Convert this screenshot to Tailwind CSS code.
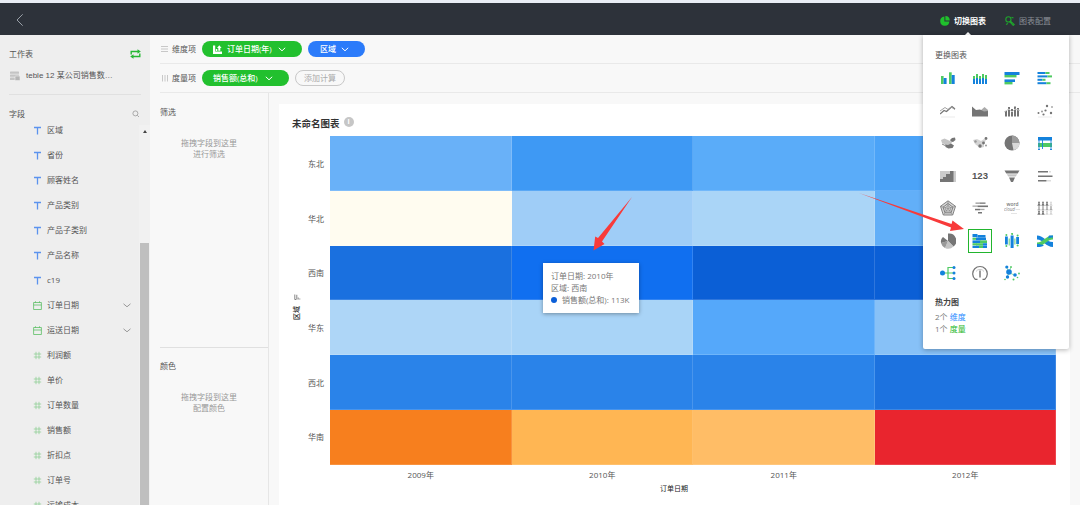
<!DOCTYPE html>
<html lang="zh-CN">
  <head>
    <meta charset="UTF-8" />
    <meta name="viewport" content="width=device-width, initial-scale=1.0" />
    <title>未命名图表</title>
    <script src="https://cdn.jsdelivr.net/npm/@tailwindcss/browser@4"></script>
  </head>

  <body
    class="relative flex flex-col w-[1080px] h-[505px] overflow-hidden bg-[#f8f8f8] font-['Open_Sans','Noto_Sans_CJK_SC',sans-serif] text-[8px] leading-3 text-[#555]"
  >
    <!-- top bar -->
    <header
      class="flex items-center shrink-0 h-[35px] border-t-3 border-[#e9edf5] bg-[#2d323a] pl-4 pr-[29px]"
    >
      <svg class="w-2 h-3 mt-px" viewBox="0 0 8 12" fill="none" stroke="#99a0a8">
        <path d="M6.7 .3 1 6l5.700 5.700" />
      </svg>
      <div class="flex items-center ml-auto mt-1 gap-[19px]">
        <div class="relative flex items-center gap-1 font-bold text-white">
          <svg class="size-[10px]" viewBox="0 0 10 10" fill="#1fc02c">
            <path d="M4.4 .6v5h5A4.6 4.6 0 1 1 4.4.6z" />
            <path d="M5.4 0A4.6 4.6 0 0 1 9.8 4.6H5.4z" />
          </svg>
          切换图表
          <div
            class="absolute left-[24px] top-[17px] border-x-4 border-b-4 border-x-transparent border-b-white"
          ></div>
        </div>
        <div class="flex items-center gap-1 text-[#8a8f96]">
          <svg
            class="size-[10px]"
            viewBox="0 0 10 10"
            fill="none"
            stroke="#1fa52c"
            stroke-width="1.1"
          >
            <circle cx="3.400" cy="3.400" r="2.600" />
            <path d="m5.200 4.800 4 3.600-1 1-3.800-4M6.500 1.200l2 .8M1 8.500l2-1" />
          </svg>
          图表配置
        </div>
      </div>
    </header>

    <div class="flex flex-1 min-h-0">
      <!-- fields -->
      <aside
        class="relative flex flex-col w-[150px] shrink-0 bg-[#eee] overflow-hidden"
      >
        <div class="flex items-center justify-between pl-[9px] pr-[9px] pt-[13px]">
          工作表
          <svg
            class="w-[11px] h-[10px]"
            viewBox="0 0 11 10"
            fill="none"
            stroke="#27b834"
            stroke-width="1.4"
          >
            <path d="M1.200 5.500V2.500H8M9.800 4.500v3H3" />
            <path
              d="M7.500.2v4.600L10.800 2.500zM3.500 5.200v4.600L.2 7.500z"
              fill="#27b834"
              stroke="none"
            />
          </svg>
        </div>
        <div class="flex items-center gap-[6px] pl-[10px] mt-[10px]">
          <svg class="size-[10px]" viewBox="0 0 10 10" fill="#c4c4c4">
            <rect width="9" height="2.400" y=".4" rx=".6" />
            <rect width="9" height="2.400" y="3.400" rx=".6" />
            <rect width="5" height="2.600" y="6.400" rx=".6" />
            <rect
              x="5"
              y="5"
              width="5"
              height="4.600"
              rx=".8"
              fill="#b5b5b5"
              stroke="#eee"
              stroke-width=".6"
            />
          </svg>
          <p class="font-['Liberation_Sans','Noto_Sans_CJK_SC',sans-serif]">
            teble 12 某公司销售数…
          </p>
        </div>
        <div class="mx-[9px] mt-3 border-t border-[#e0e0e0]"></div>
        <div class="flex items-center justify-between pl-[9px] pr-[10px] mt-[13px]">
          字段
          <svg class="size-2" viewBox="0 0 8 8" fill="none" stroke="#999" stroke-width=".8">
            <circle cx="3.400" cy="3.400" r="2.500" />
            <path d="m5.300 5.300 1.700 1.700" />
          </svg>
        </div>
        <ul id="fields" class="flex flex-col -mt-[2.500px]"></ul>

        <!-- scrollbar -->
        <div class="absolute right-0 top-[90px] bottom-0 w-[11px] bg-[#f1f1f1]">
          <div
            class="mx-auto mt-[5px] w-0 border-x-[2.5px] border-b-3 border-x-transparent border-b-[#444]"
          ></div>
          <div class="absolute top-[118px] bottom-0 left-[1px] w-[9px] bg-[#bfbfbf]"></div>
        </div>
      </aside>

      <main class="flex flex-col flex-1 min-w-0 pl-[10px]">
        <!-- shelves -->
        <div class="flex items-center h-[29px] border-b border-[#e9e9e9]">
          <svg class="w-[9px] h-2 mr-[3px]" viewBox="0 0 9 8" stroke="#bbb" stroke-width=".8">
            <path d="M1 1.500h7M1 4h7M1 6.500h7" />
          </svg>
          维度项
          <div
            class="flex items-center h-4 ml-[6px] pl-[11px] w-[100px] rounded-full bg-[#22c02e] text-white font-medium"
          >
            <svg class="size-[9px] mr-[5px]" viewBox="0 0 9 9" fill="#fff">
              <path d="M0 .5h2.200v6H9V9H0z" />
              <path d="M2.800 4h1.500v2H2.800zM5.300 5.800V3H4L6.300.2 8.600 3H7.300v2.800z" />
            </svg>
            订单日期(年)
            <svg class="w-2 h-[5px] ml-[6px]" viewBox="0 0 8 5" fill="none" stroke="#fff">
              <path d="m.8.8 3.200 3 3.200-3" />
            </svg>
          </div>
          <div
            class="flex items-center h-4 ml-[6px] pl-3 w-[57px] rounded-full bg-[#2b7bfa] text-white font-medium"
          >
            区域
            <svg class="w-2 h-[5px] ml-[5px]" viewBox="0 0 8 5" fill="none" stroke="#fff">
              <path d="m.8.8 3.200 3 3.200-3" />
            </svg>
          </div>
        </div>
        <div class="flex items-center h-[29px] border-b border-[#e9e9e9]">
          <svg class="w-[9px] h-2 mr-[3px]" viewBox="0 0 9 8" stroke="#bbb" stroke-width=".8">
            <path d="M2.500 1v6.500M5 1v6.500M7.500 1v6.500" />
          </svg>
          度量项
          <div
            class="flex items-center h-4 ml-[6px] pl-[11px] w-[87px] rounded-full bg-[#22c02e] text-white font-medium"
          >
            销售额(总和)
            <svg class="w-2 h-[5px] ml-[7px]" viewBox="0 0 8 5" fill="none" stroke="#fff">
              <path d="m.8.8 3.200 3 3.200-3" />
            </svg>
          </div>
          <div
            class="flex items-center justify-center h-4 ml-[6px] w-[50px] rounded-full border border-[#c8c8c8] text-[#aaa]"
          >
            添加计算
          </div>
        </div>

        <div class="flex flex-1 min-h-0">
          <!-- filter and color wells -->
          <div class="flex flex-col w-[109px] shrink-0 border-r border-[#e6e6e6]">
            <div class="h-[255px] pt-[13px] border-b border-[#e0e0e0]">
              <p>筛选</p>
              <p class="mt-[19px] mr-[10px] text-center leading-[11px] text-[#999]">
                拖拽字段到这里<br />进行筛选
              </p>
            </div>
            <div class="pt-[12px]">
              <p>颜色</p>
              <p class="mt-[19px] mr-[10px] text-center leading-[11px] text-[#999]">
                拖拽字段到这里<br />配置颜色
              </p>
            </div>
          </div>

          <!-- chart -->
          <section class="relative flex flex-col ml-[10px] mt-[11px] w-[791px] bg-white">
            <div
              class="flex items-center gap-1 h-8 pl-[13px] pt-[7px] text-[9.500px] font-bold text-[#333]"
            >
              未命名图表
              <span
                class="flex items-center justify-center size-[10px] -mt-[3px] rounded-full bg-[#c6c6c6] text-[7px] text-white"
                >i</span
              >
            </div>
            <div class="flex">
              <div class="flex flex-col items-center w-9 pt-[158px]">
                <svg
                  class="w-[7px] h-[6px]"
                  viewBox="0 0 7 6"
                  fill="none"
                  stroke="#777"
                  stroke-width=".9"
                >
                  <path d="M.8.500v5h1.400M2.800.800v4.700M4.200 5.500V3.500M5.800 5.500V4.500" />
                </svg>
                <p
                  class="mt-1 h-4 text-[7px] leading-[12px] font-medium text-[#222] [writing-mode:sideways-lr]"
                >
                  区域
                </p>
              </div>
              <div id="rows" class="w-[15px] flex flex-col h-[328.500px] -ml-[6px] mr-[6px] pt-px"></div>
              <div id="heatmap" class="grid grid-cols-4 grid-rows-6 w-[726px] h-[328.500px]"></div>
            </div>
            <div id="years" class="grid grid-cols-4 w-[726px] ml-[51px] mt-1 text-center"></div>
            <p class="w-[726px] ml-[32px] mt-[2px] text-center text-[7px] text-[#222]">订单日期</p>

            <!-- tooltip -->
            <div
              class="absolute left-[264px] top-[159px] w-[96px] h-[50px] pl-2 pt-[7px] bg-white text-[#777] shadow-[0_1px_4px_rgba(0,0,0,.35)]"
            >
              <p>订单日期: 2010年</p>
              <p>区域: 西南</p>
              <p class="flex items-center gap-[5px] whitespace-nowrap">
                <span class="size-[6px] rounded-full bg-[#0b5fd8]"></span>销售额(总和): 113K
              </p>
            </div>
          </section>
        </div>
      </main>
    </div>

    <!-- chart type menu -->
    <div
      class="absolute left-[923px] top-[35px] w-[146px] h-[314px] rounded-b-xs bg-white shadow-[0_1px_5px_rgba(0,0,0,.3)]"
    >
      <p class="pl-[12px] pt-[14px]">更换图表</p>
      <div id="chartTypes" class="grid grid-cols-4 w-[129.500px] ml-[8.500px] mt-px"></div>
      <p class="pl-[12px] mt-[6px] font-bold text-[#444]">热力图</p>
      <p class="pl-[12px] mt-[3px] text-[#777]">2个 <span class="text-[#2b8cff]">维度</span></p>
      <p class="pl-[12px] text-[#777]">1个 <span class="text-[#1fb82c]">度量</span></p>
    </div>

    <!-- arrows -->
    <svg
      class="absolute left-0 top-0 w-[1080px] h-[505px] pointer-events-none"
      fill="#f83a3a"
    >
      <path d="M632 197 602 241.500 604.500 244 593.500 250.500 595.200 236.500 598 238z" />
      <path d="M859 193 951.500 224 952.500 220.500 964 229 950 231 951 227.500z" />
    </svg>

    <script>
      const fields = [
        ['text', '区域'],
        ['text', '省份'],
        ['text', '顾客姓名'],
        ['text', '产品类别'],
        ['text', '产品子类别'],
        ['text', '产品名称'],
        ['text', 'c19'],
        ['date', '订单日期'],
        ['date', '运送日期'],
        ['number', '利润额'],
        ['number', '单价'],
        ['number', '订单数量'],
        ['number', '销售额'],
        ['number', '折扣点'],
        ['number', '订单号'],
        ['number', '运输成本'],
      ]

      const fieldIcons = {
        text: '<path d="M1 1.500h7M4.500 1.500V8.500" stroke="#5b93ee" stroke-width="1.300"/>',
        date: '<path d="M.6 1.500h7.800v7H.6zM.6 4h7.800M2.500.3v1.500M6.500.3v1.500" stroke="#5cbf64" stroke-width=".8"/>',
        number: '<path d="M3 .8v7.400M6 .8v7.400M.8 3h7.400M.8 6h7.400" stroke="#86cc8d" stroke-width=".7"/>',
      }

      const heat = [
        ['东北', '#69b1f8', '#3e99f4', '#5aacf9', '#4ba3f8'],
        ['华北', '#fffcf0', '#9fcdf7', '#aad5f7', '#62aff8'],
        ['西南', '#1a70df', '#106ff0', '#0b5fd6', '#0b5fd6'],
        ['华东', '#aed6f7', '#a9d4f7', '#55a8fa', '#87c1f7'],
        ['西北', '#2a83e9', '#2a83e9', '#2a83e9', '#1c72df'],
        ['华南', '#f77f1e', '#ffb653', '#ffbd66', '#e9252e'],
      ]

      const B = '#1482dc'
      const G = '#4fca62'
      const D = '#757575'
      const L = '#c4c4c4'

      // rects are [x, y, width, height, color]
      const bars = (list) =>
        list
          .map(([x, y, w, h, c]) => `<rect x="${x}" y="${y}" width="${w}" height="${h}" fill="${c}"/>`)
          .join('')
      const dots = (list) =>
        list.map(([x, y, r, c]) => `<circle cx="${x}" cy="${y}" r="${r}" fill="${c}"/>`).join('')

      const people = [0, 1, 2]
        .map((r) =>
          [0, 1, 2, 3]
            .map((i) => {
              const x = 2 + i * 4
              const y = 2.5 + r * 4.5
              const c = (r == 0 && i < 3) || (r == 2 && i < 2) ? D : r == 1 ? '#aaa' : '#d5d5d5'
              return `<circle cx="${x}" cy="${y}" r=".9" fill="${c}"/><path d="M${x} ${y}l1.700 3.200h-3.400z" fill="${c}"/>`
            })
            .join('')
        )
        .join('')

      const chartTypes = [
        bars([[1, 6, 2.6, 8, G], [3.6, 8, 3, 6, B], [9, 2.3, 2.7, 11.7, G], [11.7, 5, 3, 9, B]]),
        bars([
          [1, 6, 2, 3, G], [1, 9, 2, 5, B], [4, 4, 2, 4, G], [4, 8, 2, 6, B], [7, 6, 2, 3, G],
          [7, 9, 2, 5, B], [10, 4, 2, 4, G], [10, 8, 2, 6, B], [13, 5, 2, 4, G], [13, 9, 2, 5, B],
        ]),
        bars([[0.5, 2, 15, 3, B], [0.5, 5, 12, 2.4, G], [0.5, 9.4, 10.5, 2.6, B], [0.5, 12, 8, 2.4, G]]),
        bars([
          [0.5, 2, 8, 2, B], [8.5, 2, 4, 2, G], [0.5, 5.4, 10, 2, B], [10.5, 5.4, 4.5, 2, G],
          [0.5, 8.8, 5, 2, B], [5.5, 8.8, 3, 2, G], [0.5, 12.2, 9, 2, B], [9.5, 12.2, 4, 2, G],
        ]),
        `<path d="M0 11 4 7.500 6.500 8.500 12 3.500 15 6" stroke="${D}" stroke-width="1.300"/><path d="M0 8 5 4.500 8 6.500 11 4 15 6.500" stroke="#999" stroke-width=".9"/><path d="M1 14h14" stroke="#ddd" stroke-width=".6"/>`,
        `<path d="M8 8 12.500 4 16 7v6H8z" fill="#aaa"/><path d="M0 3.500 4 7 8 6.500 12 8.500 16 8v5.500H0z" fill="${D}"/>`,
        bars([
          [1, 8, 2, 5.5, D], [4, 4, 2, 9.5, D], [7, 6, 2, 7.5, D], [10, 3.5, 2, 10, D], [13, 5, 2, 8.5, D],
        ]) + '<path d="M0 9 5 6 8 9 11 6l5 1.500" stroke="#ccc" stroke-width="1"/>',
        dots([
          [1.5, 10, 1, D], [5, 8.5, 1, '#999'], [6.5, 11.5, 1.1, D], [8.5, 7.5, 1.1, D],
          [10, 3, 1.2, D], [15, 4, 1, '#aaa'], [14, 10, 1.2, D],
        ]) + '<path d="M1 14h14" stroke="#ddd" stroke-width=".6"/>',
        `<path d="M1 5 4.500 3.500 9 5.500 12 7 10 11 6 10 2 8z" fill="${L}"/><path d="M10 5 12 3l3-.5.5 2.500-2.500 2-2-.5zM5 9.500l3 .5 3-1.500 3 2-1.500 2.500-4 .5-3-1.500z" fill="${D}"/><path d="M2 9l3 1.500" stroke="#888"/>`,
        `<path d="M1 5 5 4 9 6 12 4 14 5 12 9 12 12 8 13 3 9z" fill="#d4d4d4"/>` +
          dots([[3.5, 6.5, 1.2, '#999'], [8, 11, 1.7, D], [11.5, 8, 1.4, D], [14, 3.5, 1.4, D], [14, 10.5, 1, '#999']]),
        `<circle cx="8" cy="8" r="7.500" fill="${D}"/><path d="M8 8h7.500A7.500 7.500 0 0 1 9.500 15.300z" fill="#d9d9d9"/><path d="M8 8V.5A7.500 7.500 0 0 1 15.500 8z" fill="#9b9b9b"/>`,
        bars([[1, 2, 14, 3.5, B], [1, 8, 14, 4, G]]) +
          `<path d="M2 2v13M14 2v13M5.500 5v9M1 14.500h2M13 14.500h2" stroke="${B}" stroke-width=".9"/>`,
        `<path d="M0 3h16v11H0z" fill="#ccc"/><path d="M0 14v-3h3V9h3V6h4V3h3.500v11z" fill="${D}"/>`,
        `<text x="0" y="11" font-family="Liberation Sans, sans-serif" font-size="8.500" font-weight="700" textLength="16" lengthAdjust="spacingAndGlyphs" fill="#555">123</text>`,
        `<path d="M.5 2.500h15l-1.800 3H2.300z" fill="${D}"/><path d="M2.800 6.200h10.400l-1.500 2.300H4.300z" fill="${L}"/><path d="M5 9.500h6L9 14H7z" fill="${D}"/>`,
        bars([[1, 3, 10, 1.5, D], [12, 3, 2, 1.5, '#ddd'], [1, 7.5, 14.5, 1.5, D], [1, 12, 8.5, 1.5, D], [10, 12, 4, 1.5, '#ddd']]),
        `<path d="M8 .8 15.500 6.300 12.700 15H3.300L.5 6.300z" fill="#d8d8d8" stroke="${D}" stroke-width=".9"/><path d="M8 3.500 13 7.200 11 12.800H5L3 7.200z" stroke="${D}" stroke-width=".9"/><path d="M8 5.500 11 8 9.800 11H6.200L5 8zM8 1v7.500M.5 6.300 8 8.500l7.500-2.200M3.300 15 8 8.500l4.700 6.500" stroke="#888" stroke-width=".7"/>`,
        bars([
          [3.5, 2.5, 4, 1.3, '#999'], [7.5, 2.5, 6, 1.3, D], [0.5, 5.5, 5, 1.3, '#aaa'], [5.5, 5.5, 10.5, 1.6, D],
          [3, 8.8, 5, 1.5, D], [8, 8.8, 4.5, 1.3, '#aaa'], [6, 12, 4, 1.5, D],
        ]),
        '<text x="2.500" y="5.500" font-size="5" font-weight="600" textLength="12" lengthAdjust="spacingAndGlyphs" fill="#777">word</text><text x="0" y="11" font-size="4.500" font-style="italic" textLength="11" lengthAdjust="spacingAndGlyphs" fill="#888">cloud</text><path d="M11.500 9.500h4.500M7 13.500h6" stroke="#ddd" stroke-width=".8"/>',
        people,
        `<path d="M8 8V.5A7.300 7.300 0 0 1 13.500 13.500z" fill="${D}"/><path d="M8 8 13.500 13.500A7.500 7.500 0 0 1 5 15z" fill="${L}"/><path d="M8 8 5 15A7.500 7.500 0 0 1 1 10z" fill="#999"/><path d="M8 8 1 10A6.500 6.500 0 0 1 3 4z" fill="${D}"/>`,
        bars([
          [0.5, 1, 5, 3.200, B], [5.5, 2, 8, 2.6, B], [0.5, 4.8, 4, 2, G], [4, 4.6, 10, 2.6, B],
          [0.5, 7.4, 8, 2.6, B], [8, 7.4, 7, 2.6, G], [0.5, 10.200, 4, 2.200, G], [4, 10.200, 7, 2.4, G],
          [11, 10.200, 4, 2.4, B], [0.5, 12.8, 14.5, 2.200, B], [7, 12.8, 4, 2.200, G],
        ]),
        bars([
          [1, 3.5, 2.8, 8, B], [6.6, 2.5, 3, 12.5, B], [12.2, 4, 2.8, 7, B],
        ]) +
          dots([[2.4, 2, 1, G], [8.1, 0.9, 1, G], [13.6, 2.6, 1, G], [2.4, 13, 1, G], [13.6, 12.5, 1, G]]) +
          `<path d="M5.200 5.500v7M10.900 5.500v6" stroke="${G}" stroke-width=".9"/>`,
        `<path d="M0 2.500C6 2.500 9 9 16 9v5C9 14 6 6.500 0 6.500z" fill="${B}"/><path d="M0 9.500C6 9.500 9 2.500 16 2.500v4C10 6.500 7 13.500 0 13.500z" fill="${G}"/><path d="M0 11c3 0 5 .5 7 1.500-2 1-4 1.500-7 1.500zM12 2.500h4v2c-2 0-3 .3-5 1z" fill="${B}"/>`,
        `<path d="M4 8h9M13 2.500H8v11h5" stroke="${G}" stroke-width="1.200"/>` +
          dots([[2.5, 8, 2.5, B], [14, 2.5, 1.5, B], [14, 8, 1.5, B], [14, 13.5, 1.5, B]]),
        '<path d="M5.500 14.300H3.200a7.300 7.300 0 1 1 9.600 0h-2.300" stroke="#757575" stroke-width="1.200"/><path d="M4 6.500a4.800 4.800 0 0 1 8 0" stroke="#bbb" stroke-width=".8"/><path d="M8 5.500v7" stroke="#666" stroke-width="1.300"/>',
        `<path d="M5 7.500 2.500 2M5 7.500l6 3M5 7.500 3 12.500M5 7.500 7 2" stroke="${G}" stroke-width=".6"/>` +
          dots([
            [2.8, 2, 1.6, B], [7, 2, 0.9, G], [5, 7, 2.8, B], [3.5, 12, 1.7, B], [11, 10, 1.8, B],
            [15, 8.5, 0.9, G], [9.5, 14.5, 1, G], [1, 14.5, 0.8, G], [13.5, 12.5, 0.8, G],
          ]),
      ]

      const selectedType = 21

      document.querySelector('#fields').innerHTML = fields
        .map(
          ([type, name]) => `
          <li class="flex items-center h-[25px] shrink-0 pl-[33px] pr-[19px]">
            <svg class="size-[9px] mr-[5px]" viewBox="0 0 9 9" fill="none">${fieldIcons[type]}</svg>
            ${name}
            ${
              type == 'date'
                ? '<svg class="w-2 h-[5px] ml-auto" viewBox="0 0 8 5" fill="none" stroke="#999"><path d="m.5.8 3.500 3 3.500-3"/></svg>'
                : ''
            }
          </li>`
        )
        .join('')

      document.querySelector('#rows').innerHTML = heat
        .map(([name]) => `<div class="flex flex-1 items-center justify-end whitespace-nowrap">${name}</div>`)
        .join('')

      document.querySelector('#heatmap').innerHTML = heat
        .map(([, ...cells]) =>
          cells
            .map((c) => `<div class="border-r border-b border-white/15" style="background-color:${c}"></div>`)
            .join('')
        )
        .join('')

      document.querySelector('#years').innerHTML = [2009, 2010, 2011, 2012]
        .map((year) => `<p>${year}年</p>`)
        .join('')

      document.querySelector('#chartTypes').innerHTML = chartTypes
        .map(
          (icon, i) => `
          <div class="flex items-center justify-center h-[32.500px]">
            <div class="flex items-center justify-center size-6 shrink-0 ${
              i == selectedType ? 'border border-[#22b52e]' : ''
            }">
              <svg class="size-4" viewBox="0 0 16 16" fill="none">${icon}</svg>
            </div>
          </div>`
        )
        .join('')
    </script>
  </body>
</html>
